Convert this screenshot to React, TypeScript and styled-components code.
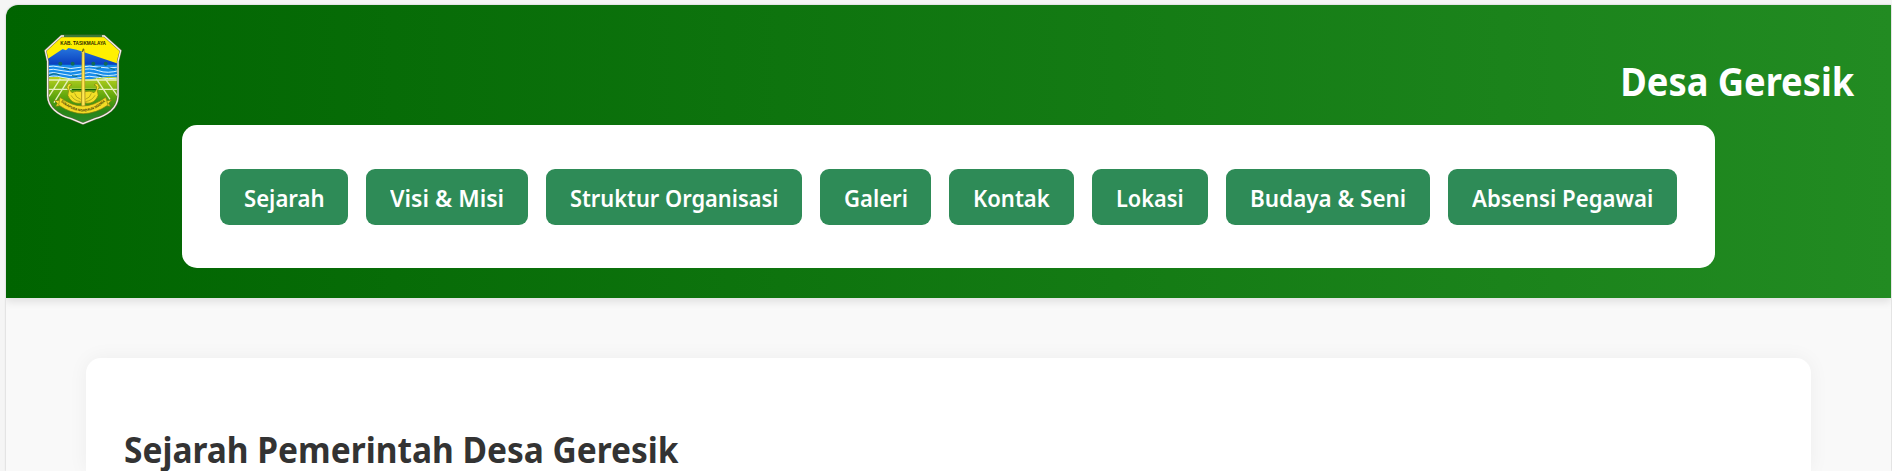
import React from "react";
import styled, { createGlobalStyle } from "styled-components";

const GlobalStyle = createGlobalStyle`
  * { box-sizing: border-box; }
  body {
    margin: 0;
    height: 471px;
    overflow: hidden;
    background: #f5f5f5;
    color: #333;
    font-family: "Noto Sans", "Open Sans", sans-serif;
  }
  #root { display: flow-root; }
`;

const Page = styled.div`
  width: 1885px;
  height: 466px;
  margin: 5px 0 0 6px;
  overflow: hidden;
  border-radius: 12px 0 0 0;
  background: #f9f9f9;
  box-shadow: 0 0 2px rgba(0, 0, 0, 0.25);
`;

const Header = styled.header`
  height: 293px;
  background: linear-gradient(90deg, #006400, #228b22);
  box-shadow: 0 4px 8px rgba(0, 0, 0, 0.1);
`;

const Brand = styled.div`
  display: flex;
  justify-content: space-between;
  height: 120px;
  padding: 23px 37px 0 29px;
`;

const Crest = styled.svg`
  display: block;
  width: 95px;
  height: 100px;
`;

const SiteTitle = styled.h1`
  margin: 26px 0 0;
  color: #fff;
  font-size: 40px;
  line-height: 54px;
  font-weight: 700;
  white-space: nowrap;
  transform: scaleX(0.906);
  transform-origin: right center;
`;

const Nav = styled.nav`
  display: flex;
  align-items: center;
  justify-content: center;
  gap: 18px;
  width: 1533px;
  height: 143px;
  margin-left: 176px;
  border-radius: 15px;
  background: #fff;
  padding-top: 1px;
`;

const NavLink = styled.a<{ $width: number }>`
  display: flex;
  flex: none;
  align-items: center;
  width: ${(p) => p.$width}px;
  height: 56px;
  padding: 2px 0 0 24px;
  border-radius: 9px;
  background: #2e8b57;
  color: #fff;
  font-size: 24px;
  font-weight: 600;
  line-height: 32px;
  white-space: nowrap;
`;

const Label = styled.span<{ $stretch: number }>`
  display: block;
  transform: scaleX(${(p) => p.$stretch});
  transform-origin: left center;
`;

const Card = styled.section`
  width: 1725px;
  height: 113px;
  margin: 60px 0 0 80px;
  padding: 67px 38px 0;
  border-radius: 15px 15px 0 0;
  background: #fff;
  box-shadow: 0 0 20px rgba(0, 0, 0, 0.05);
`;

const SectionTitle = styled.h2`
  margin: 0;
  font-size: 36px;
  font-weight: 700;
  line-height: 50px;
  white-space: nowrap;
  transform: scaleX(0.93);
  transform-origin: left center;
`;

const links = [
  { label: "Sejarah", width: 128, stretch: 0.922 },
  { label: "Visi & Misi", width: 162, stretch: 0.962 },
  { label: "Struktur Organisasi", width: 256, stretch: 0.909 },
  { label: "Galeri", width: 111, stretch: 0.92 },
  { label: "Kontak", width: 125, stretch: 0.918 },
  { label: "Lokasi", width: 116, stretch: 0.905 },
  { label: "Budaya & Seni", width: 204, stretch: 0.935 },
  { label: "Absensi Pegawai", width: 229, stretch: 0.926 },
];

const shield = "M79 24 L208 24 L257 68 L249 100 L249 205 Q248 231 228 248 Q207 265 181 272 L144 287 L108 272 Q77 264 58 246 Q39 229 38 204 L38 100 L31 68 Z";

function VillageCrest() {
  return (
    <Crest viewBox="0 0 285 300" aria-label="Kabupaten Tasikmalaya">
      <defs>
        <clipPath id="shield"><path d={shield} /></clipPath>
        <linearGradient id="mountain" x1="0" y1="0" x2="0" y2="1">
          <stop stopColor="#2676dd" /><stop offset="1" stopColor="#0637bb" />
        </linearGradient>
        <linearGradient id="field" x1="0" y1="0" x2="0" y2="1">
          <stop stopColor="#b8d020" /><stop offset=".38" stopColor="#63a80c" /><stop offset=".7" stopColor="#278516" /><stop offset="1" stopColor="#2b8d33" />
        </linearGradient>
        <path id="motto" d="M77 221 Q143 280 210 221" />
      </defs>
      <g clipPath="url(#shield)">
        <path d="M20 20H265V115H20Z" fill="#fff000" />
        <path d="M20 105L83 63L93 67L100 60L125 65L250 107V116H20Z" fill="url(#mountain)" />
        <path d="M25 110H260V154H25Z" fill="#168cea" />
        <path d="M25 151Q65 142 104 151T184 151T260 151V295H25Z" fill="url(#field)" />
        <g fill="none" stroke="#d7f2ff" strokeWidth="3">
          <path d="M28 117Q55 111 81 118T135 118T190 117T255 117" />
          <path d="M28 127Q55 120 81 128T135 127T190 128T255 127" />
          <path d="M28 138Q55 129 81 138T135 138T190 138T255 138" />
          <path d="M28 150Q55 139 81 148T135 149T190 148T255 150" />
        </g>
        <path d="M40 145Q55 132 73 141M87 121L102 125M184 121L198 119M221 119L239 125M111 143L127 146M184 141L202 147" stroke="#126c72" strokeWidth="3" fill="none" />
        <g fill="#126a58">
          <circle cx="76" cy="107" r="6" /><circle cx="113" cy="107" r="6" /><circle cx="175" cy="107" r="6" /><circle cx="212" cy="107" r="6" />
        </g>
        <path d="M38 156H249M38 184H249M76 152L42 205M102 152L57 224M184 152L225 214M210 152L247 203" stroke="#e7f1bc" strokeWidth="4" fill="none" />
      </g>
      <path d={shield} fill="none" stroke="#6b664b" strokeWidth="7" strokeLinejoin="round" />
      <path d={shield} fill="none" stroke="#f4f4ee" strokeWidth="4" strokeLinejoin="round" />
      <path d="M87 24H201" stroke="#075d08" strokeWidth="5" />
      <path d="M110 185H185" stroke="#115d09" strokeWidth="4" />
      <g fill="#f4df27" stroke="#7b8010" strokeWidth="2">
        <path d="M140 191Q123 187 111 194Q102 187 103 176Q107 170 111 171Q105 162 98 170Q92 177 101 189Q94 203 105 214Q119 230 140 224Z" />
        <path d="M149 191Q165 187 177 194Q186 187 185 176Q181 170 177 171Q183 162 190 170Q196 177 187 189Q194 203 183 214Q169 230 149 224Z" />
      </g>
      <path d="M108 202Q117 218 137 221M119 196Q122 209 137 214M180 202Q171 218 151 221M169 196Q166 209 151 214" stroke="#948b14" strokeWidth="2" fill="none" />
      <path d="M141 73L148 64L150 236H140Z" fill="#ffe852" stroke="#b79020" strokeWidth="2" />
      <path d="M143 71L145 62" stroke="#263706" strokeWidth="3" />
      <g fill="#f5da25" stroke="#817b10" strokeWidth="2">
        <path d="M77 207L70 218L58 217L67 226L62 235L76 233L83 239Z" />
        <path d="M211 207L217 218L230 216L221 226L226 235L213 233L205 239Z" />
        <path d="M75 208Q143 260 212 208L219 231Q144 283 71 231Z" />
      </g>
      <text x="76" y="52" textLength="137" lengthAdjust="spacingAndGlyphs" fontFamily="Liberation Sans, sans-serif" fontSize="14" fontWeight="700" fill="#272700">KAB. TASIKMALAYA</text>
      <text fontFamily="Liberation Sans, sans-serif" fontSize="11" fontWeight="700" fill="#383300">
        <textPath href="#motto" textLength="150" lengthAdjust="spacingAndGlyphs">SUKAPURA NGADAUN NGORA</textPath>
      </text>
    </Crest>
  );
}

export default function App() {
  return (
    <>
      <GlobalStyle />
      <Page>
        <Header>
          <Brand>
            <VillageCrest />
            <SiteTitle>Desa Geresik</SiteTitle>
          </Brand>
          <Nav>
            {links.map((link) => (
              <NavLink key={link.label} $width={link.width}>
                <Label $stretch={link.stretch}>{link.label}</Label>
              </NavLink>
            ))}
          </Nav>
        </Header>
        <Card>
          <SectionTitle>Sejarah Pemerintah Desa Geresik</SectionTitle>
        </Card>
      </Page>
    </>
  );
}
